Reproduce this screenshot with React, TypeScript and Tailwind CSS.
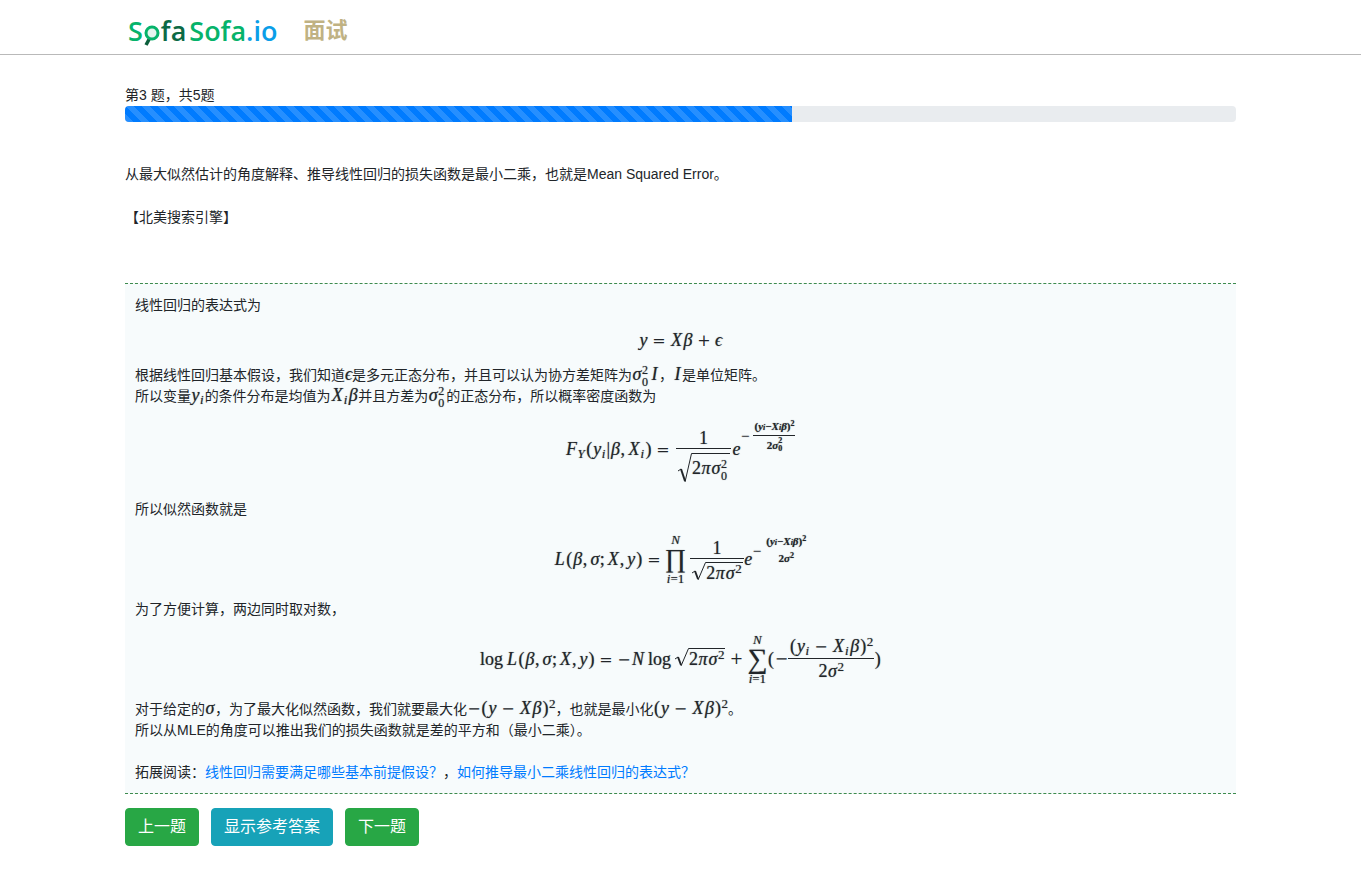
import type { ReactNode } from "react";

const glyphWidths: Record<string, string> = {
  y: "w-[9px]",
  X: "w-[13px]",
  β: "w-[10px]",
  σ: "w-[10px]",
  ϵ: "w-[7px]",
  I: "w-[9px]",
  F: "w-[12px]",
  L: "w-[12px]",
  N: "w-[14px]",
  e: "w-[9px]",
  π: "w-[10px]",
  "(": "w-[7px]",
  ")": "w-[7px]",
  "|": "w-[4px]",
  ",": "w-[7px] text-left",
  ";": "w-[7px] text-left",
  "2": "w-[9px]",
  "1": "w-[9px]",
};

const upright = "()|,;0123456789";

function Glyphs({ children }: { children: string }) {
  return (
    <>
      {Array.from(children).map((c, i) => (
        <span
          key={i}
          className={`inline-block text-center ${glyphWidths[c] ?? ""} ${upright.includes(c) ? "" : "italic"}`}
        >
          {c}
        </span>
      ))}
    </>
  );
}

function Op({ children }: { children: string }) {
  return (
    <span className="inline-block w-[22px] text-center font-['DejaVu_Serif',serif] text-[16px] leading-4 [text-shadow:none]">
      {children}
    </span>
  );
}

function Minus() {
  return (
    <span className="inline-block w-[14px] text-center font-['DejaVu_Serif',serif] text-[16px] leading-4 [text-shadow:none]">
      −
    </span>
  );
}

function Sub({ children }: { children: string }) {
  return <sub className="mr-px text-[13px] italic leading-none">{children}</sub>;
}

function Sup({ children }: { children: string }) {
  return <sup className="text-[13px] leading-none">{children}</sup>;
}

function SigmaZero() {
  return (
    <>
      <Glyphs>σ</Glyphs>
      <span className="-my-1 inline-flex w-[8px] flex-col align-middle text-[12px] leading-3">
        <span>2</span>
        <span>0</span>
      </span>
    </>
  );
}

const mathText =
  "whitespace-nowrap font-['Liberation_Serif','DejaVu_Serif',serif] text-[18px] [text-shadow:0_0_1px_rgba(33,37,41,.6)]";

function M({ children }: { children: ReactNode }) {
  return <span className={`${mathText} leading-4`}>{children}</span>;
}

function Display({ className, children }: { className: string; children: ReactNode }) {
  return (
    <div className={`flex items-center justify-center leading-5 ${mathText} ${className}`}>
      {children}
    </div>
  );
}

function Frac({ top, bottom, bar = true }: { top: ReactNode; bottom: ReactNode; bar?: boolean }) {
  return (
    <span className="grid grid-rows-[1fr_1px_1fr] justify-items-center">
      <span className="self-end px-px">{top}</span>
      <span className={`h-px w-full ${bar ? "bg-[#212529]" : ""}`} />
      <span className="self-start px-px">{bottom}</span>
    </span>
  );
}

function Root({ tall, children }: { tall?: boolean; children: ReactNode }) {
  return (
    <span className="flex items-start">
      <svg
        className={tall ? "h-[30px] w-[15px] shrink-0" : "h-[19px] w-[15px] shrink-0"}
        viewBox={tall ? "0 0 15 30" : "0 0 15 19"}
        fill="none"
        stroke="#212529"
      >
        {tall ? (
          <>
            <path d="M1 18 L4 16" />
            <path d="M4 16 L8 28" strokeWidth="2" />
            <path d="M8 29 L14.500 0.500 H15" />
          </>
        ) : (
          <>
            <path d="M1 11 L4 9" />
            <path d="M4 9 L7 17" strokeWidth="2" />
            <path d="M7 18 L14.500 0.500 H15" />
          </>
        )}
      </svg>
      <span className={`border-t border-[#212529] pr-px ${tall ? "pt-1" : ""}`}>{children}</span>
    </span>
  );
}

function BigOp({ symbol, size }: { symbol: string; size: string }) {
  return (
    <span className="grid grid-rows-[1fr_26px_1fr] justify-items-center text-[13px] leading-[13px]">
      <span className="self-end italic">N</span>
      <span className={`leading-[26px] ${size}`}>{symbol}</span>
      <span>
        <i>i</i>=1
      </span>
    </span>
  );
}

function ExponentTop() {
  return (
    <span className="flex items-baseline font-bold">
      (<i>y</i>
      <i className="text-[8px]">i</i>−<i>X</i>
      <i className="text-[8px]">i</i>
      <i>β</i>)<sup className="text-[8px]">2</sup>
    </span>
  );
}

function Logo() {
  return (
    <a
      href="#home"
      aria-label="SofaSofa.io"
      className="flex items-center font-['Open_Sans','Noto_Sans',sans-serif] text-[27px] font-semibold leading-8"
    >
      <span className="text-[#06b36b]">S</span>
      <svg className="h-8 w-[18px]" viewBox="0 0 18 32" fill="none">
        <circle cx="9" cy="18" r="6" fill="#e4f5ee" stroke="#06b36b" strokeWidth="3" />
        <path d="M6 24.500 L3 30" stroke="#0c5f3c" strokeWidth="3.500" />
      </svg>
      <span className="text-[#0c6a45]">fa</span>
      <span className="ml-[3px] text-[#06b36b]">Sofa</span>
      <span className="text-[#0a9ee8]">.io</span>
    </a>
  );
}

const button =
  "h-[38px] cursor-pointer rounded border px-3 text-[16px] leading-6 text-white";

export default function App() {
  return (
    <div className="bg-white font-['Liberation_Sans','Noto_Sans_CJK_SC',sans-serif] text-[14px] leading-[21px] text-[#212529]">
      <header className="border-b border-[#b9b9b9]">
        <nav className="mx-auto flex h-[54px] max-w-[1141px] items-center gap-[26px] px-[18px] pt-[7px]">
          <Logo />
          <a href="#interview" className="text-[22px] font-bold leading-8 text-[#c0b283]">
            面试
          </a>
        </nav>
      </header>

      <main className="mx-auto max-w-[1141px] px-[15px] pt-[30px]">
        <p>第3 题，共5题</p>
        <div
          role="progressbar"
          aria-label="答题进度"
          aria-valuenow={60}
          aria-valuemin={0}
          aria-valuemax={100}
          className="h-4 overflow-hidden rounded bg-[#e9ecef]"
        >
          <div className="h-full w-3/5 bg-[#007bff] bg-[linear-gradient(45deg,rgba(255,255,255,.15)_25%,transparent_25%,transparent_50%,rgba(255,255,255,.15)_50%,rgba(255,255,255,.15)_75%,transparent_75%,transparent)] bg-[length:16px_16px]" />
        </div>

        <section className="pt-[42px]">
          <p>从最大似然估计的角度解释、推导线性回归的损失函数是最小二乘，也就是Mean Squared Error。</p>
          <p className="mt-[22px]">【北美搜索引擎】</p>
        </section>

        <section className="mt-[55px] border-y border-dashed border-[#3d8b4e] bg-[#f7fbfc] px-[10px] pb-[10px] pt-[11px]">
          <p>线性回归的表达式为</p>
          <Display className="min-h-[49px] pb-[2px]">
            <span>
              <Glyphs>y</Glyphs>
              <Op>=</Op>
              <Glyphs>Xβ</Glyphs>
              <Op>+</Op>
              <Glyphs>ϵ</Glyphs>
            </span>
          </Display>
          <p>
            根据线性回归基本假设，我们知道<M><Glyphs>ϵ</Glyphs></M>是多元正态分布，并且可以认为协方差矩阵为
            <M><SigmaZero /><Glyphs>I</Glyphs></M>，<M><Glyphs>I</Glyphs></M>是单位矩阵。
          </p>
          <p>
            所以变量<M><Glyphs>y</Glyphs><Sub>i</Sub></M>的条件分布是均值为
            <M><Glyphs>X</Glyphs><Sub>i</Sub><Glyphs>β</Glyphs></M>并且方差为
            <M><SigmaZero /></M>的正态分布，所以概率密度函数为
          </p>
          <Display className="min-h-[92px] pb-[9px]">
            <span>
              <Glyphs>F</Glyphs><Sub>Y</Sub>
              <Glyphs>(y</Glyphs><Sub>i</Sub>
              <Glyphs>|β,X</Glyphs><Sub>i</Sub>
              <Glyphs>)</Glyphs><Op>=</Op>
            </span>
            <span className="ml-[2px]">
              <Frac
                top={<Glyphs>1</Glyphs>}
                bottom={
                  <span className="block pt-1">
                    <Root tall><Glyphs>2π</Glyphs><SigmaZero /></Root>
                  </span>
                }
              />
            </span>
            <span className="ml-px"><Glyphs>e</Glyphs></span>
            <span className="flex items-center gap-1 pb-[26px] text-[11px] leading-[14px]">
              <span className="text-[15px]">−</span>
              <Frac
                top={<ExponentTop />}
                bottom={
                  <span className="flex items-center pt-px font-bold">
                    2<i>σ</i>
                    <span className="flex flex-col text-[8px] leading-2">
                      <span>2</span>
                      <span>0</span>
                    </span>
                  </span>
                }
              />
            </span>
          </Display>
          <p>所以似然函数就是</p>
          <Display className="min-h-[79px] pb-[2px]">
            <span>
              <Glyphs>L(β,σ;X,y)</Glyphs><Op>=</Op>
            </span>
            <BigOp symbol="∏" size="text-[26px]" />
            <span className="ml-1">
              <Frac
                top={<Glyphs>1</Glyphs>}
                bottom={
                  <span className="block pt-[3px]">
                    <Root><Glyphs>2πσ</Glyphs><Sup>2</Sup></Root>
                  </span>
                }
              />
            </span>
            <Glyphs>e</Glyphs>
            <span className="flex items-center gap-1 pb-4 text-[11px] leading-[14px]">
              <span className="text-[15px]">−</span>
              <Frac
                bar={false}
                top={<ExponentTop />}
                bottom={
                  <span className="flex items-baseline font-bold">
                    2<i>σ</i><sup className="text-[8px]">2</sup>
                  </span>
                }
              />
            </span>
          </Display>
          <p>为了方便计算，两边同时取对数，</p>
          <Display className="min-h-[79px] pb-[2px]">
            <span className="mr-[3px]">log</span>
            <span>
              <Glyphs>L(β,σ;X,y)</Glyphs><Op>=</Op><Minus /><Glyphs>N</Glyphs>
            </span>
            <span className="mx-[3px]">log</span>
            <Root><Glyphs>2πσ</Glyphs><Sup>2</Sup></Root>
            <Op>+</Op>
            <BigOp symbol="∑" size="text-[28px]" />
            <Glyphs>(</Glyphs>
            <Minus />
            <Frac
              top={
                <span className="block pb-[2px]">
                  <Glyphs>(y</Glyphs><Sub>i</Sub><Op>−</Op><Glyphs>X</Glyphs><Sub>i</Sub><Glyphs>β)</Glyphs><Sup>2</Sup>
                </span>
              }
              bottom={<span className="block pt-[2px]"><Glyphs>2σ</Glyphs><Sup>2</Sup></span>}
            />
            <Glyphs>)</Glyphs>
          </Display>
          <p>
            对于给定的<M><Glyphs>σ</Glyphs></M>，为了最大化似然函数，我们就要最大化
            <M><Minus /><Glyphs>(y</Glyphs><Op>−</Op><Glyphs>Xβ)</Glyphs><Sup>2</Sup></M>，也就是最小化
            <M><Glyphs>(y</Glyphs><Op>−</Op><Glyphs>Xβ)</Glyphs><Sup>2</Sup></M>。
          </p>
          <p>所以从MLE的角度可以推出我们的损失函数就是差的平方和（最小二乘）。</p>
          <p className="mt-[21px]">
            拓展阅读：
            <a href="#assumptions" className="text-[#007bff]">线性回归需要满足哪些基本前提假设？</a>，
            <a href="#derivation" className="text-[#007bff]">如何推导最小二乘线性回归的表达式？</a>
          </p>
        </section>

        <div className="mt-[14px] flex gap-3 pb-12">
          <button type="button" className={`${button} border-[#28a745] bg-[#28a745]`}>上一题</button>
          <button type="button" className={`${button} border-[#17a2b8] bg-[#17a2b8]`}>显示参考答案</button>
          <button type="button" className={`${button} border-[#28a745] bg-[#28a745]`}>下一题</button>
        </div>
      </main>
    </div>
  );
}
